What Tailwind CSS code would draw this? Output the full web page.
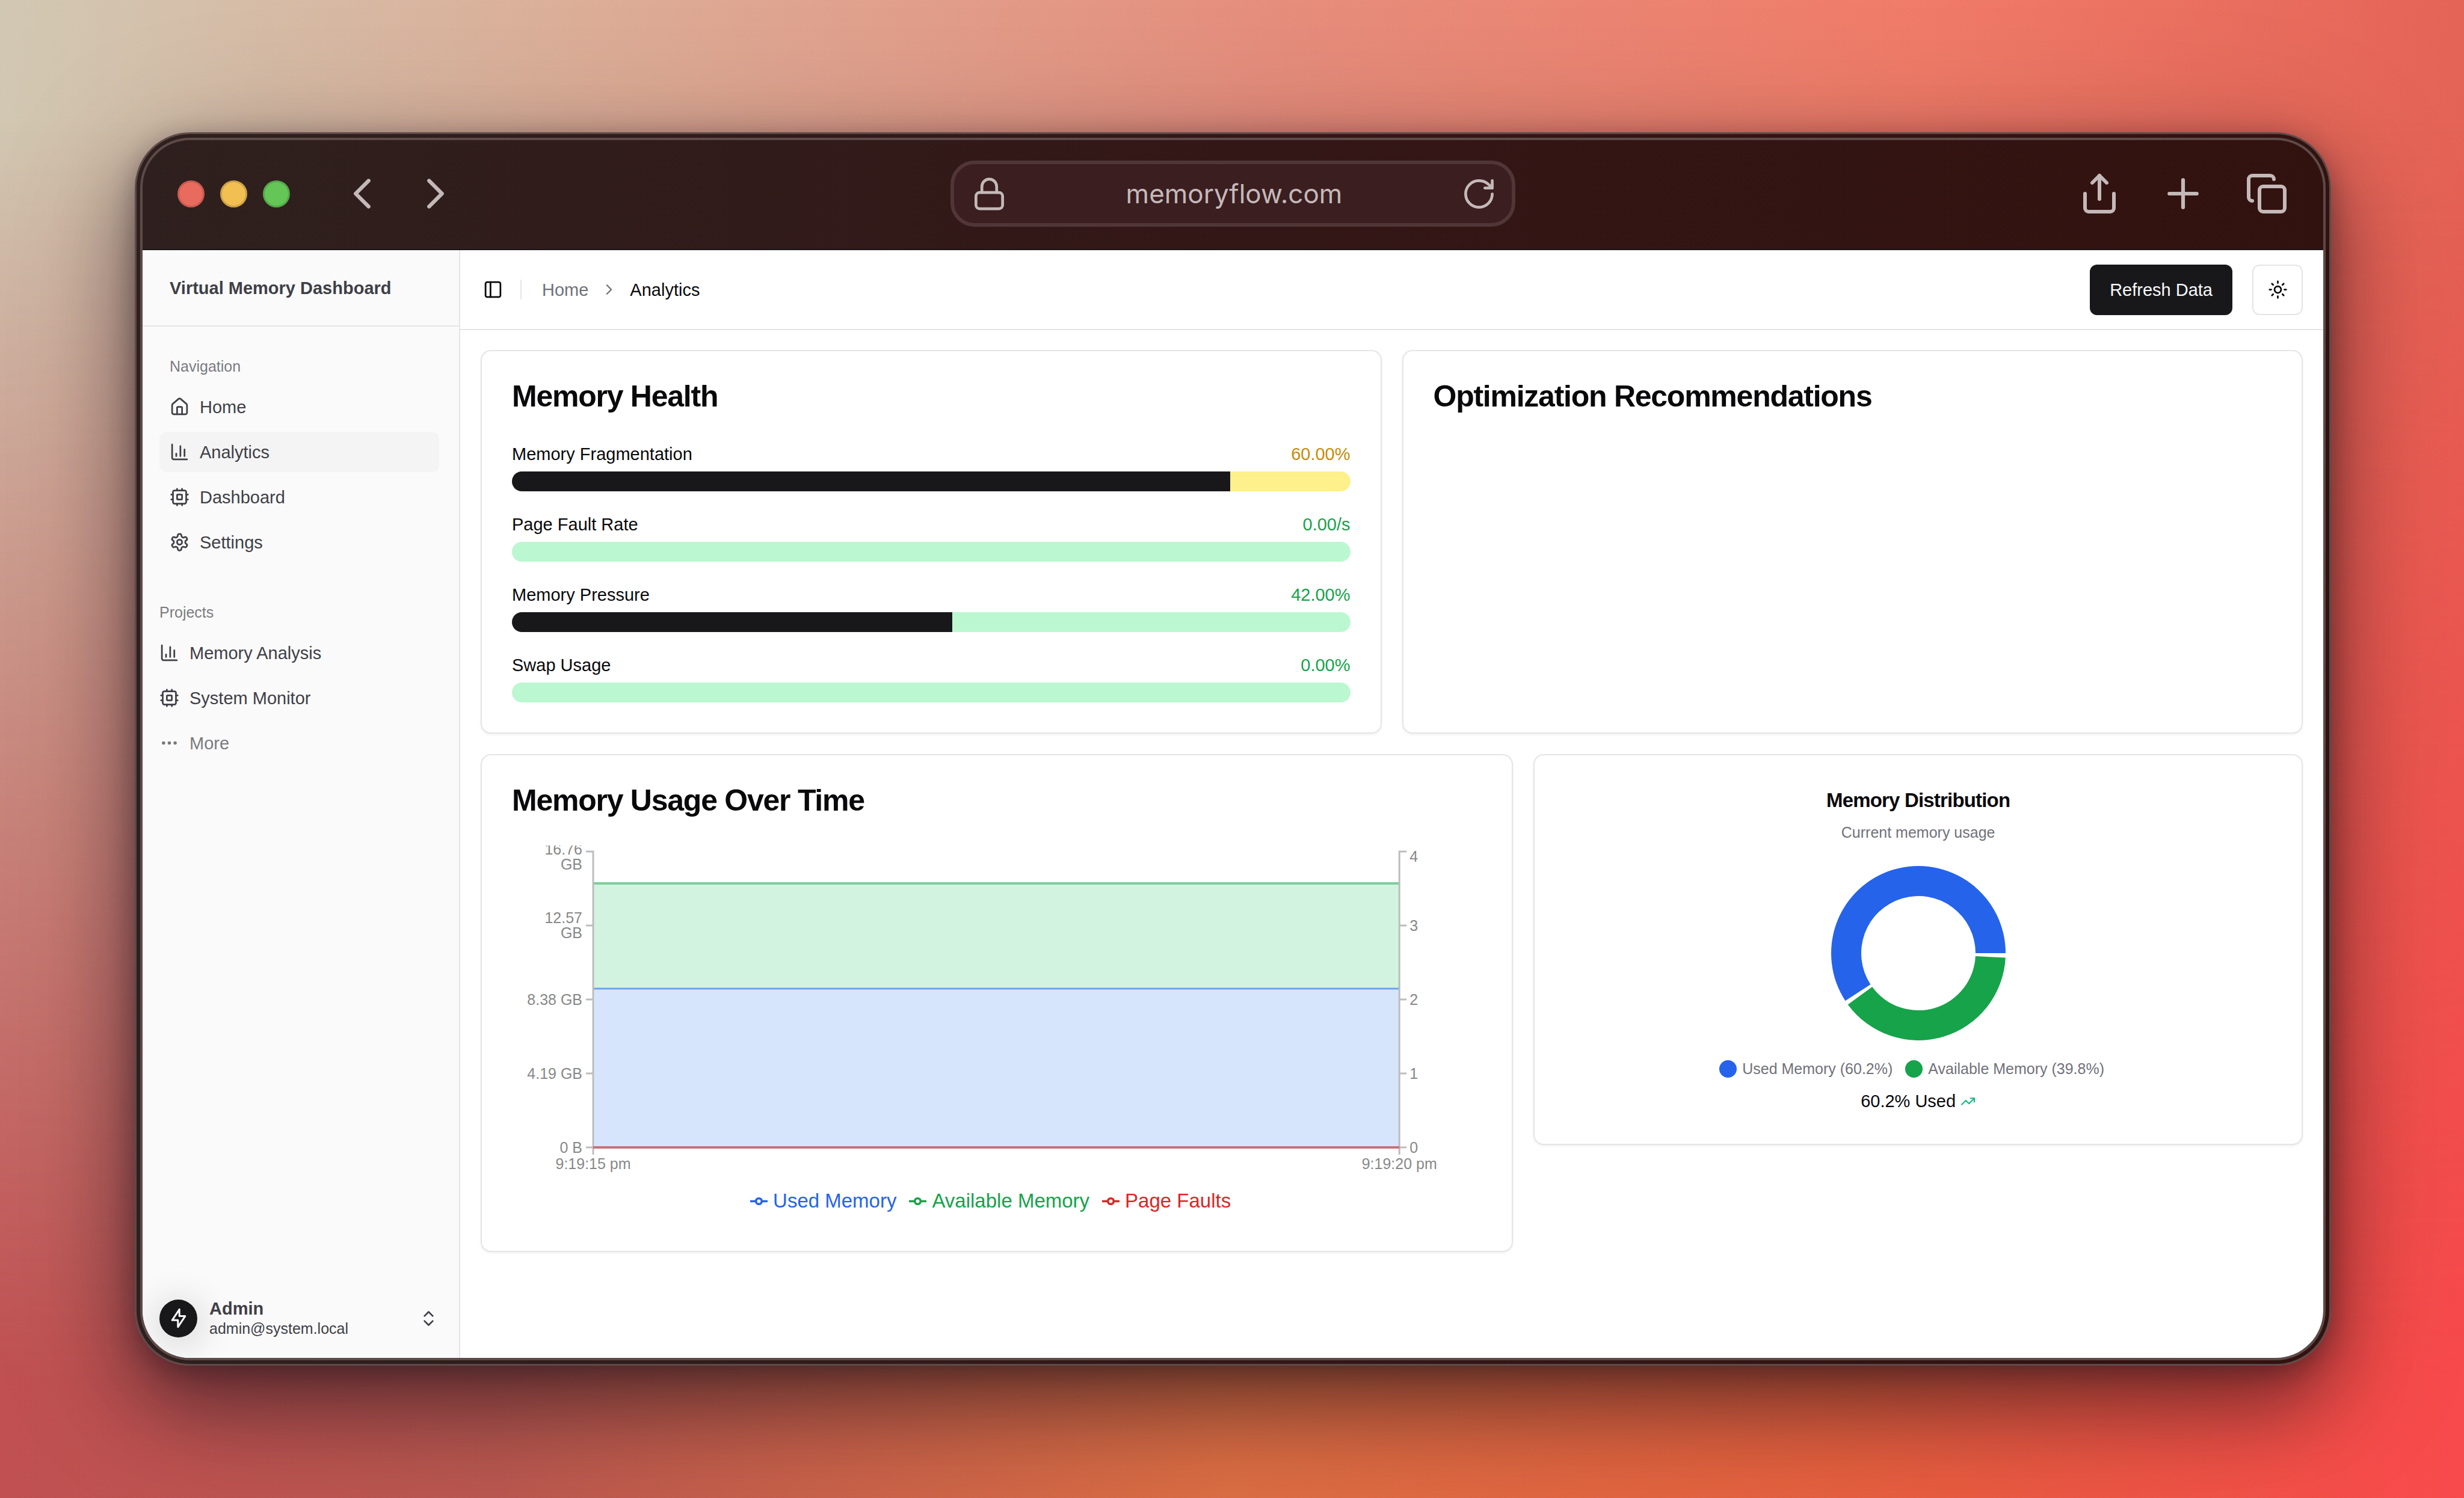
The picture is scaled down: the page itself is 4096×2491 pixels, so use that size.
<!DOCTYPE html>
<html lang="en">
<head>
<meta charset="utf-8">
<title>Virtual Memory Dashboard</title>
<script src="https://cdn.jsdelivr.net/npm/@tailwindcss/browser@4"></script>
</head>
<body class="relative isolate flex min-h-screen flex-col bg-[linear-gradient(97deg,#d1c8b3_0%,#dcae98_22%,#e68e7d_48%,#f07b68_73%,#e05c51_100%)] py-[220px] pr-[221px] pl-[224px] font-['Liberation_Sans',sans-serif] text-[29px] leading-[42px] text-[#09090b]">
  <div class="absolute inset-0 -z-10 bg-[linear-gradient(90deg,#c05052_0%,#ba5850_20%,#dc6e44_50%,#e6603f_75%,#f8494c_100%)] [mask-image:linear-gradient(to_bottom,transparent_8%,black_92%)]"></div>

  <!-- browser window -->
  <div class="flex grow flex-col rounded-[92px] border-3 border-[#5d4a49] bg-[linear-gradient(90deg,#2e201e,#331716_50%,#32120f)] p-[6px] shadow-[0_64px_130px_0_rgba(15,10,20,0.48),0_10px_40px_0_rgba(15,10,20,0.3),0_40px_320px_0_rgba(15,10,20,0.2)]">
    <div class="flex grow flex-col overflow-hidden rounded-[83px] border-4 border-[#5d4a49]">

      <!-- toolbar -->
      <div class="grid h-[183px] shrink-0 grid-cols-[1fr_auto_1fr] items-center border-b-2 border-[#17181a] px-[58px] pb-[3px] text-[#c4b9b9]">
        <div class="flex items-center">
          <div class="flex gap-[26px]">
            <button aria-label="Close" class="size-[45px] rounded-full border-3 border-[#c95a50] bg-[#e96b5e]"></button>
            <button aria-label="Minimize" class="size-[45px] rounded-full border-3 border-[#cda145] bg-[#f2bf52]"></button>
            <button aria-label="Maximize" class="size-[45px] rounded-full border-3 border-[#55a948] bg-[#63c657]"></button>
          </div>
          <div class="ml-[77px] flex gap-[36px]">
            <button aria-label="Back"><svg class="size-[86px]" viewBox="0 0 24 24" fill="none" stroke="currentColor" stroke-width="1.75" stroke-linecap="round" stroke-linejoin="round"><path d="m15 18-6-6 6-6"/></svg></button>
            <button aria-label="Forward"><svg class="size-[86px]" viewBox="0 0 24 24" fill="none" stroke="currentColor" stroke-width="1.75" stroke-linecap="round" stroke-linejoin="round"><path d="m9 18 6-6-6-6"/></svg></button>
          </div>
        </div>
        <div class="flex h-[110px] w-[939px] items-center rounded-[40px] border-6 border-[#503636] bg-[#3b1e20] pr-[25px] pl-[29px]">
          <svg class="size-[59px] shrink-0" viewBox="0 0 24 24" fill="none" stroke="currentColor" stroke-width="1.9" stroke-linecap="round" stroke-linejoin="round"><rect x="3" y="11" width="18" height="11" rx="2.500"/><path d="M7 11V7a5 5 0 0 1 10 0v4"/></svg>
          <input aria-label="Address" value="memoryflow.com" class="min-w-0 grow text-center font-['Inter',sans-serif] text-[44px] leading-[60px]">
          <button aria-label="Reload"><svg class="size-[59px]" viewBox="0 0 24 24" fill="none" stroke="currentColor" stroke-width="1.9" stroke-linecap="round" stroke-linejoin="round"><path d="M21 12a9 9 0 1 1-9-9c2.520 0 4.930 1 6.740 2.740L21 8"/><path d="M21 3v5h-5"/></svg></button>
        </div>
        <div class="flex items-center justify-end gap-[64px]">
          <button aria-label="Share"><svg class="size-[72px]" viewBox="0 0 24 24" fill="none" stroke="currentColor" stroke-width="2" stroke-linecap="round" stroke-linejoin="round"><path d="M4 12v8a2 2 0 0 0 2 2h12a2 2 0 0 0 2-2v-8"/><path d="m16 6-4-4-4 4"/><path d="M12 2v13"/></svg></button>
          <button aria-label="New tab"><svg class="size-[78px]" viewBox="0 0 24 24" fill="none" stroke="currentColor" stroke-width="1.9" stroke-linecap="round" stroke-linejoin="round"><path d="M5 12h14M12 5v14"/></svg></button>
          <button aria-label="Tabs"><svg class="size-[72px]" viewBox="0 0 24 24" fill="none" stroke="currentColor" stroke-width="2" stroke-linecap="round" stroke-linejoin="round"><rect x="8" y="8" width="14" height="14" rx="2"/><path d="M4 16c-1.100 0-2-.9-2-2V4c0-1.100.9-2 2-2h10c1.100 0 2 .9 2 2"/></svg></button>
        </div>
      </div>

      <div class="flex grow bg-white">
        <!-- sidebar -->
        <aside class="flex w-[528px] shrink-0 flex-col border-r-2 border-[#e5e5e5] bg-[#fafafa] text-[#3f3f46]">
          <div class="flex h-[127px] items-center border-b-2 border-[#e5e5e5] px-[45px] font-bold">Virtual Memory Dashboard</div>
          <nav class="flex flex-col pt-[33px] pr-[33px] pl-[28px]">
            <h2 class="flex h-[67px] items-center px-[17px] text-[25px] leading-[33px] text-[#3f3f46]/70">Navigation</h2>
            <ul class="flex flex-col gap-[8px]">
              <li><a href="#" class="flex h-[67px] items-center gap-[17px] rounded-[12px] px-[17px]"><svg class="size-[33px]" viewBox="0 0 24 24" fill="none" stroke="currentColor" stroke-width="2" stroke-linecap="round" stroke-linejoin="round"><path d="M15 21v-8a1 1 0 0 0-1-1h-4a1 1 0 0 0-1 1v8"/><path d="M3 10a2 2 0 0 1 .709-1.528l7-5.999a2 2 0 0 1 2.582 0l7 5.999A2 2 0 0 1 21 10v9a2 2 0 0 1-2 2H5a2 2 0 0 1-2-2z"/></svg>Home</a></li>
              <li><a href="#" class="flex h-[67px] items-center gap-[17px] rounded-[12px] bg-[#f4f4f5] px-[17px]"><svg class="size-[33px]" viewBox="0 0 24 24" fill="none" stroke="currentColor" stroke-width="2" stroke-linecap="round" stroke-linejoin="round"><path d="M3 3v16a2 2 0 0 0 2 2h16"/><path d="M18 17V9M13 17V5M8 17v-3"/></svg>Analytics</a></li>
              <li><a href="#" class="flex h-[67px] items-center gap-[17px] rounded-[12px] px-[17px]"><svg class="size-[33px]" viewBox="0 0 24 24" fill="none" stroke="currentColor" stroke-width="2" stroke-linecap="round" stroke-linejoin="round"><rect x="4" y="4" width="16" height="16" rx="2"/><rect x="9" y="9" width="6" height="6" rx="1"/><path d="M15 2v2M15 20v2M2 15h2M2 9h2M20 15h2M20 9h2M9 2v2M9 20v2"/></svg>Dashboard</a></li>
              <li><a href="#" class="flex h-[67px] items-center gap-[17px] rounded-[12px] px-[17px]"><svg class="size-[33px]" viewBox="0 0 24 24" fill="none" stroke="currentColor" stroke-width="2" stroke-linecap="round" stroke-linejoin="round"><path d="M12.22 2h-.44a2 2 0 0 0-2 2v.18a2 2 0 0 1-1 1.73l-.43.25a2 2 0 0 1-2 0l-.15-.08a2 2 0 0 0-2.73.73l-.22.38a2 2 0 0 0 .73 2.73l.15.1a2 2 0 0 1 1 1.72v.51a2 2 0 0 1-1 1.74l-.15.09a2 2 0 0 0-.73 2.73l.22.38a2 2 0 0 0 2.73.73l.15-.08a2 2 0 0 1 2 0l.43.25a2 2 0 0 1 1 1.73V20a2 2 0 0 0 2 2h.44a2 2 0 0 0 2-2v-.18a2 2 0 0 1 1-1.73l.43-.25a2 2 0 0 1 2 0l.15.08a2 2 0 0 0 2.73-.73l.22-.39a2 2 0 0 0-.73-2.73l-.15-.08a2 2 0 0 1-1-1.74v-.5a2 2 0 0 1 1-1.74l.15-.09a2 2 0 0 0 .73-2.73l-.22-.38a2 2 0 0 0-2.73-.73l-.15.08a2 2 0 0 1-2 0l-.43-.25a2 2 0 0 1-1-1.73V4a2 2 0 0 0-2-2z"/><circle cx="12" cy="12" r="3"/></svg>Settings</a></li>
            </ul>
            <h2 class="mt-[50px] flex h-[67px] items-center text-[25px] leading-[33px] text-[#3f3f46]/70">Projects</h2>
            <ul class="flex flex-col gap-[8px]">
              <li><a href="#" class="flex h-[67px] items-center gap-[17px]"><svg class="size-[33px]" viewBox="0 0 24 24" fill="none" stroke="currentColor" stroke-width="2" stroke-linecap="round" stroke-linejoin="round"><path d="M3 3v16a2 2 0 0 0 2 2h16"/><path d="M18 17V9M13 17V5M8 17v-3"/></svg>Memory Analysis</a></li>
              <li><a href="#" class="flex h-[67px] items-center gap-[17px]"><svg class="size-[33px]" viewBox="0 0 24 24" fill="none" stroke="currentColor" stroke-width="2" stroke-linecap="round" stroke-linejoin="round"><rect x="4" y="4" width="16" height="16" rx="2"/><rect x="9" y="9" width="6" height="6" rx="1"/><path d="M15 2v2M15 20v2M2 15h2M2 9h2M20 15h2M20 9h2M9 2v2M9 20v2"/></svg>System Monitor</a></li>
              <li><button class="flex h-[67px] w-full items-center gap-[17px] text-[#3f3f46]/70"><svg class="size-[33px]" viewBox="0 0 24 24" fill="none" stroke="currentColor" stroke-width="2" stroke-linecap="round" stroke-linejoin="round"><circle cx="12" cy="12" r="1"/><circle cx="19" cy="12" r="1"/><circle cx="5" cy="12" r="1"/></svg>More</button></li>
            </ul>
          </nav>
          <button class="mt-auto mb-[33px] flex items-center pr-[34px] pl-[28px] text-left">
            <span class="flex size-[63px] items-center justify-center rounded-full bg-[#18181b] text-[#fafafa] shadow-[0_8px_60px_8px_rgba(0,0,0,0.14)]"><svg class="size-[36px]" viewBox="0 0 24 24" fill="none" stroke="currentColor" stroke-width="2" stroke-linejoin="round"><path d="M12.800 2.200v7.500h6.400l-8 12v-7.500H4.800z"/></svg></span>
            <span class="ml-[20px] grow">
              <span class="block leading-[34px] font-bold">Admin</span>
              <span class="block text-[25px] leading-[32px]">admin@system.local</span>
            </span>
            <svg class="size-[33px]" viewBox="0 0 24 24" fill="none" stroke="currentColor" stroke-width="2" stroke-linecap="round" stroke-linejoin="round"><path d="m7 15 5 5 5-5M7 9l5-5 5 5"/></svg>
          </button>
        </aside>

        <main class="flex min-w-0 grow flex-col">
          <header class="flex h-[133px] items-center border-b-2 border-[#e5e5e5] pr-[34px] pl-[38px]">
            <button aria-label="Toggle sidebar"><svg class="size-[33px]" viewBox="0 0 24 24" fill="none" stroke="currentColor" stroke-width="2" stroke-linecap="round" stroke-linejoin="round"><rect x="3" y="3" width="18" height="18" rx="2"/><path d="M9 3v18"/></svg></button>
            <div class="mr-[34px] ml-[29px] h-[33px] w-[2px] bg-[#e5e5e5]"></div>
            <nav class="flex items-center gap-[20px]">
              <a href="#" class="text-[#71717a]">Home</a>
              <svg class="size-[29px] text-[#71717a]" viewBox="0 0 24 24" fill="none" stroke="currentColor" stroke-width="2" stroke-linecap="round" stroke-linejoin="round"><path d="m9 18 6-6-6-6"/></svg>
              <span>Analytics</span>
            </nav>
            <button class="ml-auto h-[84px] rounded-[12px] bg-[#18181b] px-[33px] text-[#fafafa]">Refresh Data</button>
            <button aria-label="Toggle theme" class="ml-[33px] flex size-[84px] items-center justify-center rounded-[12px] border-2 border-[#e5e5e5]"><svg class="size-[33px]" viewBox="0 0 24 24" fill="none" stroke="currentColor" stroke-width="2" stroke-linecap="round" stroke-linejoin="round"><circle cx="12" cy="12" r="4"/><path d="M12 2v2M12 20v2M4.93 4.93l1.41 1.41M17.66 17.66l1.41 1.41M2 12h2M20 12h2M6.34 17.66l-1.41 1.41M19.07 4.93l-1.41 1.41"/></svg></button>
          </header>

          <div class="flex flex-col gap-[34px] px-[34px] py-[33px]">
            <div class="grid grid-cols-2 gap-[34px]">
              <section class="rounded-[17px] border-2 border-[#e5e5e5] p-[50px] shadow-[0_2px_4px_rgba(0,0,0,0.06)]">
                <h2 class="text-[50px] leading-[50px] font-bold tracking-tight">Memory Health</h2>
                <div class="mt-[50px] flex flex-col gap-[34px]">
                  <div>
                    <div class="flex justify-between"><span>Memory Fragmentation</span><span class="text-[#ca8a04]">60.00%</span></div>
                    <div class="mt-[8px] h-[33px] overflow-hidden rounded-full bg-[#fef08a]"><div class="h-full bg-[#18181b]" style="width:85.7%"></div></div>
                  </div>
                  <div>
                    <div class="flex justify-between"><span>Page Fault Rate</span><span class="text-[#16a34a]">0.00/s</span></div>
                    <div class="mt-[8px] h-[33px] overflow-hidden rounded-full bg-[#bbf7d0]"></div>
                  </div>
                  <div>
                    <div class="flex justify-between"><span>Memory Pressure</span><span class="text-[#16a34a]">42.00%</span></div>
                    <div class="mt-[8px] h-[33px] overflow-hidden rounded-full bg-[#bbf7d0]"><div class="h-full bg-[#18181b]" style="width:52.5%"></div></div>
                  </div>
                  <div>
                    <div class="flex justify-between"><span>Swap Usage</span><span class="text-[#16a34a]">0.00%</span></div>
                    <div class="mt-[8px] h-[33px] overflow-hidden rounded-full bg-[#bbf7d0]"></div>
                  </div>
                </div>
              </section>
              <section class="rounded-[17px] border-2 border-[#e5e5e5] p-[50px] shadow-[0_2px_4px_rgba(0,0,0,0.06)]">
                <h2 class="text-[50px] leading-[50px] font-bold tracking-tight">Optimization Recommendations</h2>
              </section>
            </div>

            <div class="grid grid-cols-7 items-start gap-[34px]">
              <section class="col-span-4 rounded-[17px] border-2 border-[#e5e5e5] p-[50px] shadow-[0_2px_4px_rgba(0,0,0,0.06)]">
                <h2 class="text-[50px] leading-[50px] font-bold tracking-tight">Memory Usage Over Time</h2>
                <svg class="mt-[50px] block h-auto w-full overflow-hidden text-[25px]" viewBox="0 0 1612 566">
                  <rect x="135" y="63" width="1340" height="175" fill="#d2f3df"/>
                  <rect x="135" y="238" width="1340" height="264" fill="#d7e5fc"/>
                  <path d="M135 63h1340" stroke="#7bcf9b" stroke-width="4"/>
                  <path d="M135 238h1340" stroke="#6fa1ef" stroke-width="3"/>
                  <g fill="none" stroke="#bdbdbd" stroke-width="3">
                    <path d="M123 10h12v504M123 133h12M123 256h12M123 379h12M123 502h12"/>
                    <path d="M1487 10h-12v504M1475 133h12M1475 256h12M1475 379h12M1475 502h12"/>
                  </g>
                  <path d="M135 502h1340" stroke="#cb6f78" stroke-width="4"/>
                  <g fill="#888888" text-anchor="end">
                    <text x="117" y="15">16.76</text><text x="117" y="40">GB</text>
                    <text x="117" y="129">12.57</text><text x="117" y="154">GB</text>
                    <text x="117" y="265">8.38 GB</text>
                    <text x="117" y="388">4.19 GB</text>
                    <text x="117" y="511">0 B</text>
                  </g>
                  <g fill="#888888">
                    <text x="1492" y="27">4</text><text x="1492" y="142">3</text><text x="1492" y="265">2</text><text x="1492" y="388">1</text><text x="1492" y="511">0</text>
                  </g>
                  <g fill="#888888" text-anchor="middle">
                    <text x="135" y="538">9:19:15 pm</text><text x="1475" y="538">9:19:20 pm</text>
                  </g>
                </svg>
                <ul class="flex justify-center pb-[8px] text-[33px] leading-[50px]">
                  <li class="mr-[21px] flex items-center gap-[9px] text-[#2563eb]"><svg class="size-[29px]" viewBox="0 0 32 32" fill="none" stroke="currentColor" stroke-width="4"><path d="M0 16h10.700M21.300 16H32"/><circle cx="16" cy="16" r="5.300"/></svg>Used Memory</li>
                  <li class="mr-[21px] flex items-center gap-[9px] text-[#16a34a]"><svg class="size-[29px]" viewBox="0 0 32 32" fill="none" stroke="currentColor" stroke-width="4"><path d="M0 16h10.700M21.300 16H32"/><circle cx="16" cy="16" r="5.300"/></svg>Available Memory</li>
                  <li class="mr-[21px] flex items-center gap-[9px] text-[#dc2626]"><svg class="size-[29px]" viewBox="0 0 32 32" fill="none" stroke="currentColor" stroke-width="4"><path d="M0 16h10.700M21.300 16H32"/><circle cx="16" cy="16" r="5.300"/></svg>Page Faults</li>
                </ul>
              </section>

              <section class="col-span-3 flex flex-col items-center rounded-[17px] border-2 border-[#e5e5e5] p-[50px] shadow-[0_2px_4px_rgba(0,0,0,0.06)]">
                <h2 class="text-[33px] leading-[50px] font-bold tracking-tight">Memory Distribution</h2>
                <p class="mt-[12px] text-[25px] leading-[33px] text-[#71717a]">Current memory usage</p>
                <svg class="mt-[39px] size-[290px]" viewBox="-145 -145 290 290">
                  <path fill="#2563eb" d="M145 0A145 145 0 1 0-121.500 79.200L-79.600 51.900A95 95 0 1 1 95 0Z"/>
                  <path fill="#16a34a" d="M-117.200 85.400A145 145 0 0 0 144.800 7.600L94.900 5A95 95 0 0 1-76.800 56Z"/>
                </svg>
                <ul class="mt-[31px] flex text-[25px] leading-[33px] text-[#71717a]">
                  <li class="mr-[21px] flex items-center gap-[9px]"><span class="size-[29px] rounded-full bg-[#2563eb]"></span>Used Memory (60.2%)</li>
                  <li class="mr-[21px] flex items-center gap-[9px]"><span class="size-[29px] rounded-full bg-[#16a34a]"></span>Available Memory (39.8%)</li>
                </ul>
                <p class="mt-[16px] flex items-center gap-[8px]">60.2% Used <svg class="size-[25px] text-[#10b981]" viewBox="0 0 24 24" fill="none" stroke="currentColor" stroke-width="2" stroke-linecap="round" stroke-linejoin="round"><path d="m22 7-8.500 8.500-5-5L2 17"/><path d="M16 7h6v6"/></svg></p>
              </section>
            </div>
          </div>
        </main>
      </div>
    </div>
  </div>
</body>
</html>
